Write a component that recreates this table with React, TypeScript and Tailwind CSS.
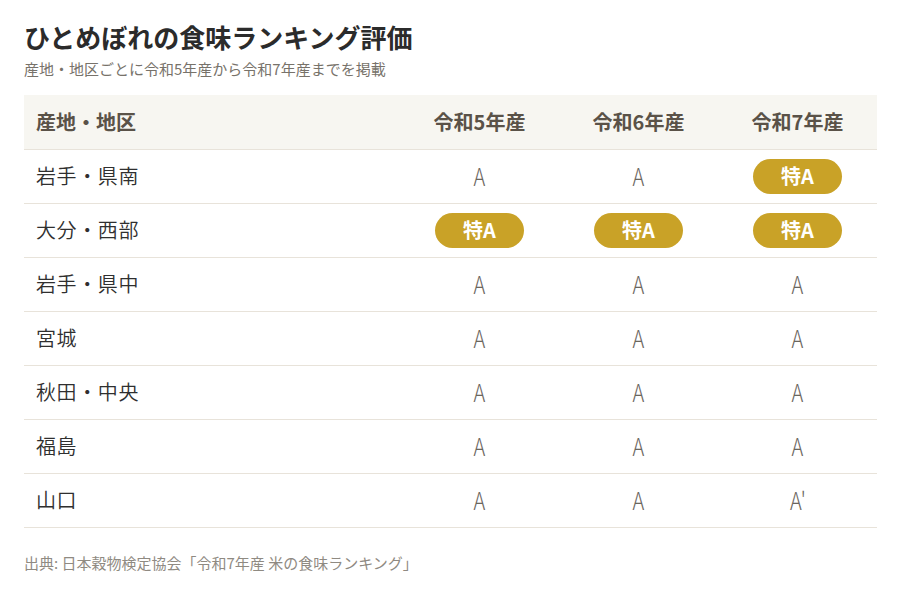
const FONT = { fontFamily: '"Noto Sans CJK JP", "Noto Sans", sans-serif' };

type Grade = "特A" | "A" | "A'";

const rows: { area: string; grades: Grade[] }[] = [
  { area: "岩手・県南", grades: ["A", "A", "特A"] },
  { area: "大分・西部", grades: ["特A", "特A", "特A"] },
  { area: "岩手・県中", grades: ["A", "A", "A"] },
  { area: "宮城", grades: ["A", "A", "A"] },
  { area: "秋田・中央", grades: ["A", "A", "A"] },
  { area: "福島", grades: ["A", "A", "A"] },
  { area: "山口", grades: ["A", "A", "A'"] },
];

function GradeCell({ grade }: { grade: Grade }) {
  if (grade === "特A") {
    return (
      <span className="inline-flex h-[35px] w-[89px] items-center justify-center rounded-full bg-[#c9a227] text-[20px] font-bold text-white">
        特A
      </span>
    );
  }
  return (
    <span className="inline-block origin-center scale-x-[0.8] text-[25px] font-light text-[#6b665e]">
      {grade}
    </span>
  );
}

export default function App() {
  return (
    <main className="min-h-screen w-full bg-white px-6 pt-[18px]" style={FONT}>
      <h1 className="text-[26px] font-bold leading-[38px] text-[#2b2b2b]">ひとめぼれの食味ランキング評価</h1>
      <p className="mt-[3px] text-[15px] leading-5 text-[#77726a]">
        産地・地区ごとに令和5年産から令和7年産までを掲載
      </p>

      <table className="mt-[16px] w-[853px] border-collapse">
        <thead>
          <tr className="h-[54px] border-b border-[#e8e3da] bg-[#f7f6f1] text-[20px] font-bold text-[#5a5248]">
            <th className="w-[376px] px-3 text-left font-bold">産地・地区</th>
            <th className="w-[159px] text-center font-bold">令和5年産</th>
            <th className="w-[159px] text-center font-bold">令和6年産</th>
            <th className="w-[159px] text-center font-bold">令和7年産</th>
          </tr>
        </thead>
        <tbody>
          {rows.map((r) => (
            <tr key={r.area} className="h-[54px] border-b border-[#e8e3da]">
              <td className="px-3 text-[20px] font-[350] tracking-[0.03em] text-[#2f2f2f]">{r.area}</td>
              {r.grades.map((g, i) => (
                <td key={i} className="text-center">
                  <GradeCell grade={g} />
                </td>
              ))}
            </tr>
          ))}
        </tbody>
      </table>

      <p className="mt-[24px] text-[15px] text-[#8f8a82]">
        出典: 日本穀物検定協会「令和7年産 米の食味ランキング」
      </p>
    </main>
  );
}
